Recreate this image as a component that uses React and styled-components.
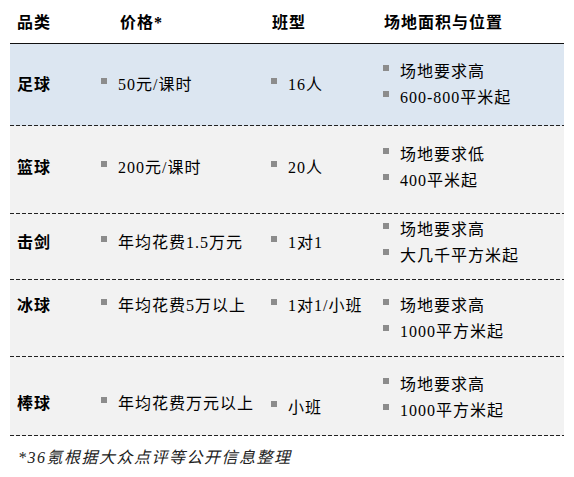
import React from "react";
import styled, { createGlobalStyle } from "styled-components";

const GlobalStyle = createGlobalStyle`
  body {
    margin: 0;
    background: #fff;
    color: #111;
    font-family: "Liberation Serif", "Noto Sans CJK SC", serif;
  }
`;

const COLUMNS = "85px 170px 112px 187px";

const rows = [
  {
    name: "足球", height: 82, bg: "#dce6f1", shift: 0,
    price: "50元/课时", size: "16人",
    site: ["场地要求高", "600-800平米起"],
  },
  {
    name: "篮球", height: 88, bg: "#f2f2f2", shift: -2,
    price: "200元/课时", size: "20人",
    site: ["场地要求低", "400平米起"],
  },
  {
    name: "击剑", height: 66, bg: "#f2f2f2", shift: -4,
    price: "年均花费1.5万元", size: "1对1",
    site: ["场地要求高", "大几千平方米起"],
  },
  {
    name: "冰球", height: 77, bg: "#f2f2f2", shift: 0, dy: [-13, -13, -13],
    price: "年均花费5万以上", size: "1对1/小班",
    site: ["场地要求高", "1000平方米起"],
  },
  {
    name: "棒球", height: 79, bg: "#f2f2f2", shift: 1.5, dy: [6, 6, 10],
    price: "年均花费万元以上", size: "小班",
    site: ["场地要求高", "1000平方米起"],
  },
];

function App() {
  return (
    <Page>
      <GlobalStyle />
      <Table>
        <HeaderRow>
          <HeadCell $pad={7}>品类</HeadCell>
          <HeadCell $pad={25}>价格*</HeadCell>
          <HeadCell $pad={7}>班型</HeadCell>
          <HeadCell $pad={7}>场地面积与位置</HeadCell>
        </HeaderRow>
        {rows.map(row => {
          const dy = row.dy || [0, 0, 0];
          return (
            <Row key={row.name} $h={row.height} $bg={row.bg} $shift={row.shift}>
              <Cell $dy={dy[0]} $pad={7}>
                <Name>{row.name}</Name>
              </Cell>
              <Cell $dy={dy[1]}>
                <Item><Bullet />{row.price}</Item>
              </Cell>
              <Cell $dy={dy[2]}>
                <Item><Bullet />{row.size}</Item>
              </Cell>
              <Cell>
                {row.site.map(s => (
                  <Item key={s}><Bullet />{s}</Item>
                ))}
              </Cell>
            </Row>
          );
        })}
      </Table>
      <Note>*36氪根据大众点评等公开信息整理</Note>
    </Page>
  );
}

const Page = styled.div`
  width: 574px;
  height: 477px;
  padding: 0 10px;
  box-sizing: border-box;
`;

const Table = styled.div`
  width: 554px;
`;

const HeaderRow = styled.div`
  display: grid;
  grid-template-columns: ${COLUMNS};
  align-items: center;
  height: 44px;
  box-sizing: border-box;
  padding-bottom: 1px;
  border-bottom: 1.5px solid #111;
`;

const HeadCell = styled.div`
  padding-left: ${p => p.$pad}px;
  font-size: 16px;
  font-weight: bold;
  letter-spacing: 1px;
  color: #000;
`;

const Row = styled.div`
  display: grid;
  grid-template-columns: ${COLUMNS};
  align-items: center;
  height: ${p => p.$h}px;
  box-sizing: border-box;
  padding-top: ${p => Math.max(0, p.$shift * 2)}px;
  padding-bottom: ${p => Math.max(0, -p.$shift * 2)}px;
  background-color: ${p => p.$bg};
  background-image: repeating-linear-gradient(to right, #222 0 4px, transparent 4px 6px);
  background-size: 100% 1px;
  background-position: left bottom;
  background-repeat: no-repeat;
`;

const Cell = styled.div`
  padding-left: ${p => (p.$pad != null ? p.$pad : 6)}px;
  margin-top: ${p => Math.max(0, (p.$dy || 0) * 2)}px;
  margin-bottom: ${p => Math.max(0, -(p.$dy || 0) * 2)}px;
`;

const Name = styled.div`
  font-size: 16px;
  font-weight: bold;
  letter-spacing: 1px;
  line-height: 26px;
  color: #000;
`;

const Item = styled.div`
  display: flex;
  align-items: flex-start;
  font-size: 16px;
  line-height: 26px;
  letter-spacing: 1px;
  white-space: nowrap;
  color: #000;
`;

const Bullet = styled.span`
  flex-shrink: 0;
  width: 6px;
  height: 6px;
  margin: 6px 11px 0 0;
  background: #8c8c8c;
`;

const Note = styled.div`
  margin-top: 9px;
  padding-left: 8px;
  font-size: 16px;
  line-height: 26px;
  font-style: italic;
  letter-spacing: 1.5px;
  color: #222;
`;

export default App;
